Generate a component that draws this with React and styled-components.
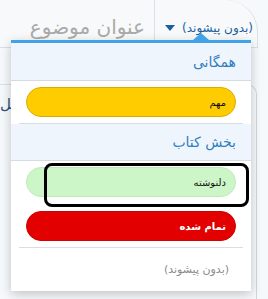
import React from 'react'
import styled, { createGlobalStyle } from 'styled-components'

const Global = createGlobalStyle`
  html, body {
    margin: 0;
    padding: 0;
    background: #f6f9fc;
    overflow: hidden;
  }
  body {
    font-family: "DejaVu Sans", "Noto Sans", sans-serif;
    direction: rtl;
  }
`

const Page = styled.div`
  position: relative;
  width: 268px;
  height: 299px;
  overflow: hidden;
`

const TopBar = styled.div`
  display: flex;
  align-items: stretch;
  width: 258px;
  height: 48px;
  margin: 0 auto 0 0;
  box-sizing: border-box;
  border-bottom: 1px solid #dcdfe3;
  border-right: 1px solid #dcdfe3;
  border-radius: 0 32px 0 0;
  background: #f7f9fb;
`

const PrefixButton = styled.div`
  display: flex;
  align-items: center;
  gap: 7px;
  padding: 8px 4px 0 10px;
  border-left: 1px solid #dcdfe3;
  color: #1d5f9f;
  font-size: 12px;
`

const Caret = styled.span`
  width: 0;
  height: 0;
  border-left: 5px solid transparent;
  border-right: 5px solid transparent;
  border-top: 6px solid #1d5f9f;
`

const TitleInput = styled.div`
  flex: 1;
  display: flex;
  align-items: center;
  padding: 6px 9px 0 0;
  color: #a9a9a9;
  font-size: 20px;
  line-height: 22px;
`

const BackCard = styled.div`
  width: 257px;
  height: 230px;
  margin: 36px auto 0 0;
  box-sizing: border-box;
  border-top: 1px solid #dcdfe3;
  border-right: 1px solid #d2d6db;
  border-radius: 0 10px 0 0;
  padding: 10px 0 0 0;
`

const BackLabel = styled.div`
  width: 12px;
  text-align: left;
  color: #2d5078;
  font-size: 15px;
  line-height: 18px;
`

const Menu = styled.div`
  position: absolute;
  left: 11px;
  top: 40px;
  width: 240px;
  height: 248px;
  background: #ffffff;
  border-top: 3px solid #43a2e6;
  box-shadow: 0 3px 10px rgba(0, 0, 0, 0.22);
  &::before {
    content: '';
    position: absolute;
    top: -10px;
    left: 182px;
    border-left: 8px solid transparent;
    border-right: 8px solid transparent;
    border-bottom: 7px solid #43a2e6;
  }
`

const GroupHeader = styled.div`
  height: ${p => p.h}px;
  display: flex;
  align-items: center;
  padding-right: 15px;
  background: #eff5fc;
  border-bottom: 1px solid #d6dbe1;
  color: #2f7fbf;
  font-size: 14px;
`

const Options = styled.div`
  display: flex;
  flex-direction: column;
  gap: 14px;
  padding: 6px 15px;
`

const Pill = styled.div`
  position: relative;
  height: 30px;
  box-sizing: border-box;
  display: flex;
  align-items: center;
  padding-right: 9px;
  border-radius: 15px;
  border: 1px solid ${p => p.edge};
  background: ${p => p.bg};
  color: ${p => p.fg};
  font-size: 10px;
  font-weight: ${p => (p.strong ? 'bold' : 'normal')};
`

const FocusRing = styled.div`
  position: absolute;
  left: 17px;
  right: -14px;
  top: -5px;
  bottom: -11px;
  border: 3px solid #000;
  border-radius: 8px;
`

const Divider = styled.div`
  height: 1px;
  margin: 0 8px;
  background: #dadde1;
`

const Empty = styled.div`
  padding: 15px 22px 0 0;
  color: #8a8a8a;
  font-size: 11px;
`

export default function App() {
  return (
    <Page>
      <Global />
      <TopBar>
        <PrefixButton>
          <span>(بدون پیشوند)</span>
          <Caret />
        </PrefixButton>
        <TitleInput>عنوان موضوع</TitleInput>
      </TopBar>
      <BackCard dir="ltr">
        <BackLabel>ـل</BackLabel>
      </BackCard>
      <Menu>
        <GroupHeader h={37}>همگانی</GroupHeader>
        <Options>
          <Pill bg="#ffcc00" edge="#d9ad00" fg="#111">مهم</Pill>
        </Options>
        <Divider />
        <GroupHeader h={36}>بخش کتاب</GroupHeader>
        <Options>
          <Pill bg="#ccf6c8" edge="#bfe9bb" fg="#111">
            دلنوشته
            <FocusRing />
          </Pill>
          <Pill bg="#e20000" edge="#d00000" fg="#fff" strong>تمام شده</Pill>
        </Options>
        <Divider />
        <Empty>(بدون پیشوند)</Empty>
      </Menu>
    </Page>
  )
}
